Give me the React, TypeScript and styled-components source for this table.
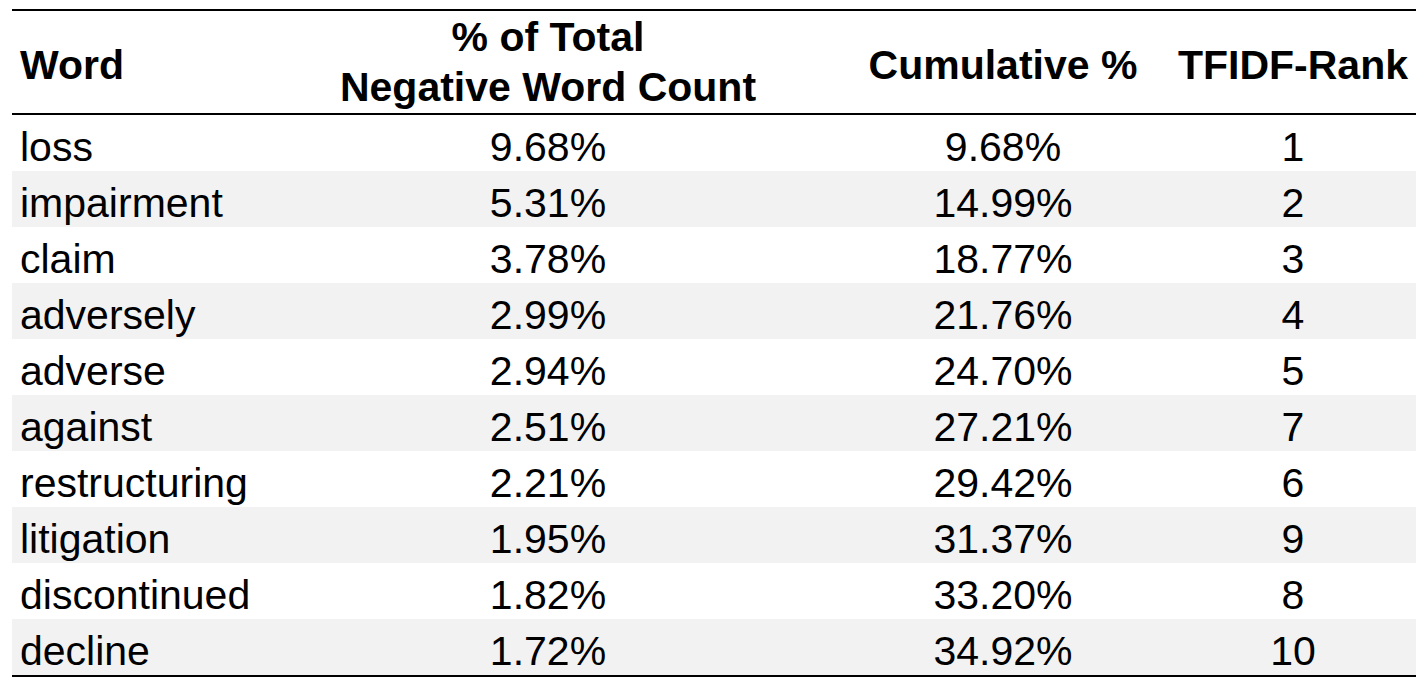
import React from 'react';
import styled, { createGlobalStyle } from 'styled-components';

interface IWordRow {
    word: string;
    share: string;
    cumulative: string;
    rank: number;
}

const ROWS: IWordRow[] = [
    { word: 'loss', share: '9.68%', cumulative: '9.68%', rank: 1 },
    { word: 'impairment', share: '5.31%', cumulative: '14.99%', rank: 2 },
    { word: 'claim', share: '3.78%', cumulative: '18.77%', rank: 3 },
    { word: 'adversely', share: '2.99%', cumulative: '21.76%', rank: 4 },
    { word: 'adverse', share: '2.94%', cumulative: '24.70%', rank: 5 },
    { word: 'against', share: '2.51%', cumulative: '27.21%', rank: 7 },
    { word: 'restructuring', share: '2.21%', cumulative: '29.42%', rank: 6 },
    { word: 'litigation', share: '1.95%', cumulative: '31.37%', rank: 9 },
    { word: 'discontinued', share: '1.82%', cumulative: '33.20%', rank: 8 },
    { word: 'decline', share: '1.72%', cumulative: '34.92%', rank: 10 }
];

const GlobalStyle = createGlobalStyle`
    html, body {
        margin: 0;
        padding: 0;
        background: #ffffff;
    }
    body {
        font-family: "Liberation Sans", Arial, sans-serif;
        color: #000000;
    }
`;

const Page = styled.div`
    padding: 9px 12px;
`;

const Table = styled.div`
    width: 1404px;
    border-top: 2px solid #000;
    border-bottom: 2px solid #000;
`;

const Row = styled.div<{ $shaded?: boolean }>`
    display: grid;
    grid-template-columns: 248px 576px 334px 246px;
    height: 56px;
    background: ${(p) => (p.$shaded ? '#f2f2f2' : '#ffffff')};
`;

const HeadRow = styled(Row)`
    height: 102px;
    align-items: center;
    border-bottom: 2px solid #000;
    background: #ffffff;
`;

const HeadCell = styled.div<{ $left?: boolean; $single?: boolean }>`
    font-size: 41px;
    font-weight: 700;
    line-height: 50px;
    text-align: ${(p) => (p.$left ? 'left' : 'center')};
    padding-left: ${(p) => (p.$left ? '8px' : '0')};
    padding-top: ${(p) => (p.$single ? '6px' : '0')};
    white-space: nowrap;
`;

const Cell = styled.div<{ $left?: boolean }>`
    font-size: 41px;
    line-height: 44px;
    padding-top: 10px;
    text-align: ${(p) => (p.$left ? 'left' : 'center')};
    padding-left: ${(p) => (p.$left ? '8px' : '0')};
    white-space: nowrap;
`;

const App = () => {
    return (
        <>
            <GlobalStyle />
            <Page>
                <Table>
                    <HeadRow>
                        <HeadCell $left $single>Word</HeadCell>
                        <HeadCell>
                            % of Total
                            <br />
                            Negative Word Count
                        </HeadCell>
                        <HeadCell $single>Cumulative %</HeadCell>
                        <HeadCell $single>TFIDF-Rank</HeadCell>
                    </HeadRow>
                    {ROWS.map((row, i) => (
                        <Row key={row.word} $shaded={i % 2 === 1}>
                            <Cell $left>{row.word}</Cell>
                            <Cell>{row.share}</Cell>
                            <Cell>{row.cumulative}</Cell>
                            <Cell>{row.rank}</Cell>
                        </Row>
                    ))}
                </Table>
            </Page>
        </>
    );
};

export default App;
